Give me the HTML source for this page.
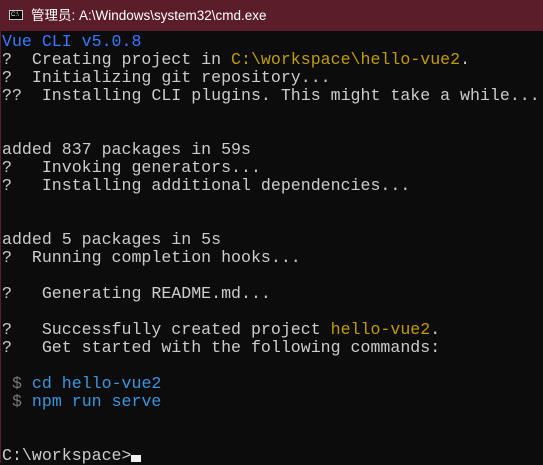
<!DOCTYPE html><html><head><style>
body{margin:0;width:543px;height:463px;overflow:hidden;background:#0c0c0c;}
.t{height:31px;background:#5b1d2a;color:#fff;font:13.5px "Liberation Sans","Noto Sans CJK SC",sans-serif;line-height:31px;position:relative}
.t span{position:absolute;left:31px;top:0}
.ic{position:absolute;left:9px;top:10px;width:14px;height:10px;background:#000;border:1px solid #ccc;box-sizing:border-box}
.ic:after{content:"C:\\";position:absolute;left:1px;top:-11px;font-size:6px;color:#fff}
pre{margin:0;padding:2px 0 0 1px;font:16.6px "Liberation Mono",monospace;line-height:18px;color:#cccccc;border-left:1px solid #5b1d2a;height:430px}
.b{color:#3b78ff}.y{color:#c19c00}.c{color:#3a96dd}.g{color:#767676}
.cur{display:inline-block;width:10px;height:7px;background:#f2f2f2;vertical-align:-2px}
</style></head><body>
<div class="t"><div class="ic"></div><span>管理员: A:\Windows\system32\cmd.exe</span></div>
<pre><span class="b">Vue CLI v5.0.8</span>
?  Creating project in <span class="y">C:\workspace\hello-vue2</span>.
?  Initializing git repository...
??  Installing CLI plugins. This might take a while...


added 837 packages in 59s
?   Invoking generators...
?   Installing additional dependencies...


added 5 packages in 5s
?  Running completion hooks...

?   Generating README.md...

?   Successfully created project <span class="y">hello-vue2</span>.
?   Get started with the following commands:

 <span class="g">$</span> <span class="c">cd hello-vue2</span>
 <span class="g">$</span> <span class="c">npm run serve</span>


C:\workspace&gt;<span class="cur"></span></pre>
</body></html>
